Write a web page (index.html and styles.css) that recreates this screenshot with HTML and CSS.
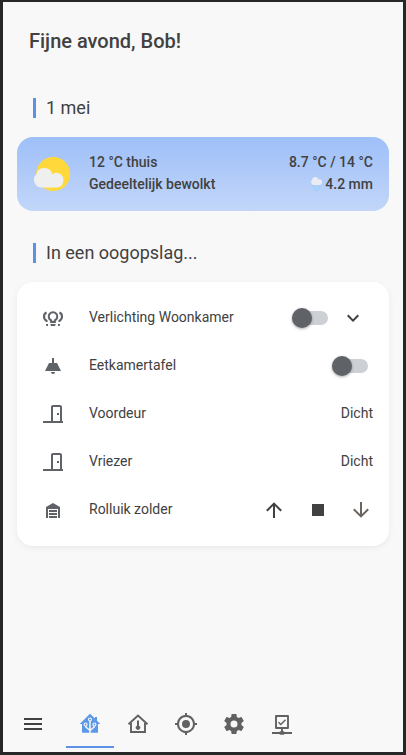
FILE: index.html
```
<!DOCTYPE html>
<html lang="nl">
<head>
<meta charset="utf-8">
<title>Thuis</title>
<link rel="stylesheet" href="styles.css">
</head>
<body>
<div class="app">
  <main>
    <h1>Fijne avond, Bob!</h1>
    <h2>1 mei</h2>
    <section class="weather">
      <svg class="weather-icon" viewBox="0 0 40 40"><circle cx="20.200" cy="20" r="17" fill="#ffd93c"/><path d="M9 33.500a7.800 7.800 0 0 1-5.500-13.500A8.200 8.200 0 0 1 19.300 20.200A6.900 6.900 0 0 1 30.300 26.500Q30 33.500 23.500 33.500Z" fill="#efefef"/></svg>
      <div class="now"><div>12 °C thuis</div><div>Gedeeltelijk bewolkt</div></div>
      <div class="range"><div>8.7 °C / 14 °C</div><div class="rain"><svg class="rain-icon" viewBox="0 0 14 14"><path d="M3.500 8A3 3 0 0 1 2 3a3.300 3.300 0 0 1 6.500-.5A2.600 2.600 0 0 1 12 5.500Q12 8 9 8Z" fill="#e9edf2"/><path d="M3 9.500h1.500M6 9.500h1.500M9 9.500h1.500M4 11.500h1.500M8 11.500h1.500M6 13.300h1.500" stroke="#7fcdf8" stroke-width="1.200"/></svg>4.2 mm</div></div>
    </section>
    <h2>In een oogopslag...</h2>
    <section class="list">
      <div class="row">
        <svg class="icon" viewBox="0 0 24 24"><g fill="none" stroke="currentColor" stroke-width="2.100"><path d="M10.200 16v-1.600a4.300 4.300 0 1 1 3.600 0V16Z"/><path d="M5.600 6.500Q3 7.500 3 10.500t2.500 4.200V16M18.400 6.500Q21 7.500 21 10.500t-2.500 4.200V16"/></g><path d="M9.500 18h5v1a1 1 0 0 1-1 1h-3a1 1 0 0 1-1-1zM5 18h2v2H6q-1 0-1-1zM17 18h2v1q0 1-1 1h-1z"/></svg>
        <span class="name">Verlichting Woonkamer</span>
        <span class="toggle"></span>
        <svg class="icon chevron" viewBox="0 0 24 24"><path d="M7.410,8.580L12,13.170L16.590,8.580L18,10L12,16L6,10L7.410,8.580Z"/></svg>
      </div>
      <div class="row">
        <svg class="icon" viewBox="0 0 24 24"><path d="M11 4h2v5h3l4 8H4l4-8h3zM10 18h4a2 2 0 0 1-4 0"/></svg>
        <span class="name">Eetkamertafel</span>
        <span class="toggle last"></span>
      </div>
      <div class="row">
        <svg class="icon" viewBox="0 0 24 24"><path d="M16,11H18V13H16V11M12,3H19C20.110,3 21,3.890 21,5V19H22V21H2V19H10V5C10,3.890 10.890,3 12,3M12,5V19H19V5H12Z"/></svg>
        <span class="name">Voordeur</span><span class="state">Dicht</span>
      </div>
      <div class="row">
        <svg class="icon" viewBox="0 0 24 24"><path d="M16,11H18V13H16V11M12,3H19C20.110,3 21,3.890 21,5V19H22V21H2V19H10V5C10,3.890 10.890,3 12,3M12,5V19H19V5H12Z"/></svg>
        <span class="name">Vriezer</span><span class="state">Dicht</span>
      </div>
      <div class="row">
        <svg class="icon" viewBox="0 0 24 24"><path d="M19,20H17V11H7V20H5V9L12,5L19,9V20M8,12H16V14H8V12M8,15H16V17H8V15M16,18V20H8V18H16Z"/></svg>
        <span class="name">Rolluik zolder</span>
        <div class="cover">
          <svg class="icon" viewBox="0 0 24 24"><path d="M13,20H11V8L5.500,13.500L4.080,12.080L12,4.160L19.920,12.080L18.500,13.500L13,8V20Z"/></svg>
          <svg class="icon stop" viewBox="0 0 24 24"><path d="M18,18H6V6H18V18Z"/></svg>
          <svg class="icon dim" viewBox="0 0 24 24"><path d="M11,4H13V16L18.500,10.500L19.920,11.920L12,19.840L4.080,11.920L5.500,10.500L11,16V4Z"/></svg>
        </div>
      </div>
    </section>
  </main>
  <nav>
    <a class="menu"><svg class="icon" viewBox="0 0 24 24"><path d="M3,6H21V8H3V6M3,11H21V13H3V11M3,16H21V18H3V16Z"/></svg></a>
    <a class="tab active"><svg class="icon" viewBox="0 0 24 24"><path d="M12 1.700l5 4.800V5h2v3.700L22.300 12H20v8.700H4V12H1.700Z"/><g fill="none" stroke="#f8f8f8" stroke-width="1.100"><path d="M12 9v12M12 18.500L7.800 15v-1M12 18.500l4.200-3.500v-1" stroke-width="1.500"/><circle cx="12" cy="7.500" r="1.500"/><circle cx="7.600" cy="12.500" r="1.500"/><circle cx="16.400" cy="12.500" r="1.500"/></g></svg></a>
    <a class="tab"><svg class="icon" viewBox="0 0 24 24"><path d="M2.500 12.300L12 3.500l9.500 8.800M5 11v9h14v-9" fill="none" stroke="currentColor" stroke-width="1.900"/><path d="M11 9.200a1 1 0 0 1 2 0v4.500a2.200 2.200 0 1 1-2 0z"/></svg></a>
    <a class="tab"><svg class="icon" viewBox="0 0 24 24"><path d="M12,8A4,4 0 0,1 16,12A4,4 0 0,1 12,16A4,4 0 0,1 8,12A4,4 0 0,1 12,8M3.050,13H1V11H3.050C3.500,6.830 6.830,3.500 11,3.050V1H13V3.050C17.170,3.500 20.500,6.830 20.950,11H23V13H20.950C20.500,17.170 17.170,20.500 13,20.950V23H11V20.950C6.830,20.500 3.500,17.170 3.050,13M12,5A7,7 0 0,0 5,12A7,7 0 0,0 12,19A7,7 0 0,0 19,12A7,7 0 0,0 12,5Z"/></svg></a>
    <a class="tab"><svg class="icon" viewBox="0 0 24 24"><path d="M12,15.500A3.500,3.500 0 0,1 8.500,12A3.500,3.500 0 0,1 12,8.500A3.500,3.500 0 0,1 15.500,12A3.500,3.500 0 0,1 12,15.500M19.430,12.970C19.470,12.650 19.500,12.330 19.500,12C19.500,11.670 19.470,11.340 19.430,11L21.540,9.370C21.730,9.220 21.780,8.950 21.660,8.730L19.660,5.270C19.540,5.050 19.270,4.960 19.050,5.050L16.560,6.050C16.040,5.660 15.500,5.320 14.870,5.070L14.500,2.420C14.460,2.180 14.250,2 14,2H10C9.750,2 9.540,2.180 9.500,2.420L9.130,5.070C8.500,5.320 7.960,5.660 7.440,6.050L4.950,5.050C4.730,4.960 4.460,5.050 4.340,5.270L2.340,8.730C2.210,8.950 2.270,9.220 2.460,9.370L4.570,11C4.530,11.340 4.500,11.670 4.500,12C4.500,12.330 4.530,12.650 4.570,12.970L2.460,14.630C2.270,14.780 2.210,15.050 2.340,15.270L4.340,18.730C4.460,18.950 4.730,19.030 4.950,18.950L7.440,17.940C7.960,18.340 8.500,18.680 9.130,18.930L9.500,21.580C9.540,21.820 9.750,22 10,22H14C14.250,22 14.460,21.820 14.500,21.580L14.870,18.930C15.500,18.670 16.040,18.340 16.560,17.940L19.050,18.950C19.270,19.030 19.540,18.950 19.660,18.730L21.660,15.270C21.780,15.050 21.730,14.780 21.540,14.630L19.430,12.970Z"/></svg></a>
    <a class="tab"><svg class="icon" viewBox="0 0 24 24"><path d="M6 4h12v12H6zM12 17v4M2 21h20" fill="none" stroke="currentColor" stroke-width="1.900" stroke-linejoin="round"/><path d="M8.500 10.200l2.300 2.300 4.700-4.700" fill="none" stroke="currentColor" stroke-width="1.500"/><rect x="9.500" y="19.200" width="5" height="3.600" rx="1"/></svg></a>
  </nav>
</div>
</body>
</html>
```
FILE: styles.css
```
* { box-sizing: border-box; }
body { margin: 0; font: 400 14px/22px Roboto, sans-serif; color: #414141; }
.app {
  height: 755px;
  border: solid #272727;
  border-width: 2px 3px 3px;
  background: #f8f8f8;
  display: flex;
  flex-direction: column;
}
main { flex: 1; padding: 27px 14px 0; }
h1 { margin: 0 0 45px 12px; font-size: 20px; font-weight: 500; line-height: 24px; }
h2 {
  margin: 0 0 19px 16px;
  padding-left: 10px;
  border-left: 3px solid #5b92e5;
  font-size: 18px;
  font-weight: 400;
  line-height: 20px;
}
.icon { display: block; width: 24px; height: 24px; fill: currentColor; flex: none; }
.weather {
  display: flex;
  align-items: center;
  height: 74px;
  margin-bottom: 32px;
  padding: 0 16px;
  border-radius: 16px;
  background: linear-gradient(#9ebff8, #c3d6f9);
  font-weight: 500;
}
.weather-icon { width: 40px; height: 40px; margin-right: 16px; }
.now { flex: 1; padding-bottom: 2px; }
.range { text-align: right; padding-bottom: 2px; }
.rain { display: flex; justify-content: flex-end; align-items: center; gap: 1px; }
.rain-icon { width: 14px; height: 14px; }
.list {
  display: grid;
  grid-auto-rows: 40px;
  gap: 8px;
  height: 264px;
  padding: 16px 16px 16px 24px;
  border-radius: 16px;
  background: #fff;
  box-shadow: 0 2px 6px rgba(0, 0, 0, .06);
}
.row { display: flex; align-items: center; }
.row > .icon:first-child { margin-right: 24px; color: #5f6368; }
.name { flex: 1; padding-bottom: 2px; }
.state { padding-bottom: 2px; }
.toggle {
  width: 36px;
  height: 14px;
  border-radius: 7px;
  background: #cdd0d5;
  display: flex;
  align-items: center;
}
.toggle::before {
  content: "";
  width: 20px;
  height: 20px;
  flex: none;
  border-radius: 50%;
  background: #5f6368;
  box-shadow: 0 1px 3px rgba(0, 0, 0, .35);
}
.toggle.last { margin-right: 5px; }
.chevron { margin: 0 8px 0 13px; }
.cover { display: flex; gap: 20px; }
.cover .stop { margin-right: -1px; }
.cover .dim { color: #6b6562; }
nav { display: flex; height: 56px; padding: 4px 0 4px 6px; color: #616161; }
.menu, .tab { width: 48px; height: 48px; padding: 12px; }
.menu { margin-right: 9px; color: #414141; }
.active { color: #5c98e8; border-bottom: 2px solid #5b92e5; }
```
